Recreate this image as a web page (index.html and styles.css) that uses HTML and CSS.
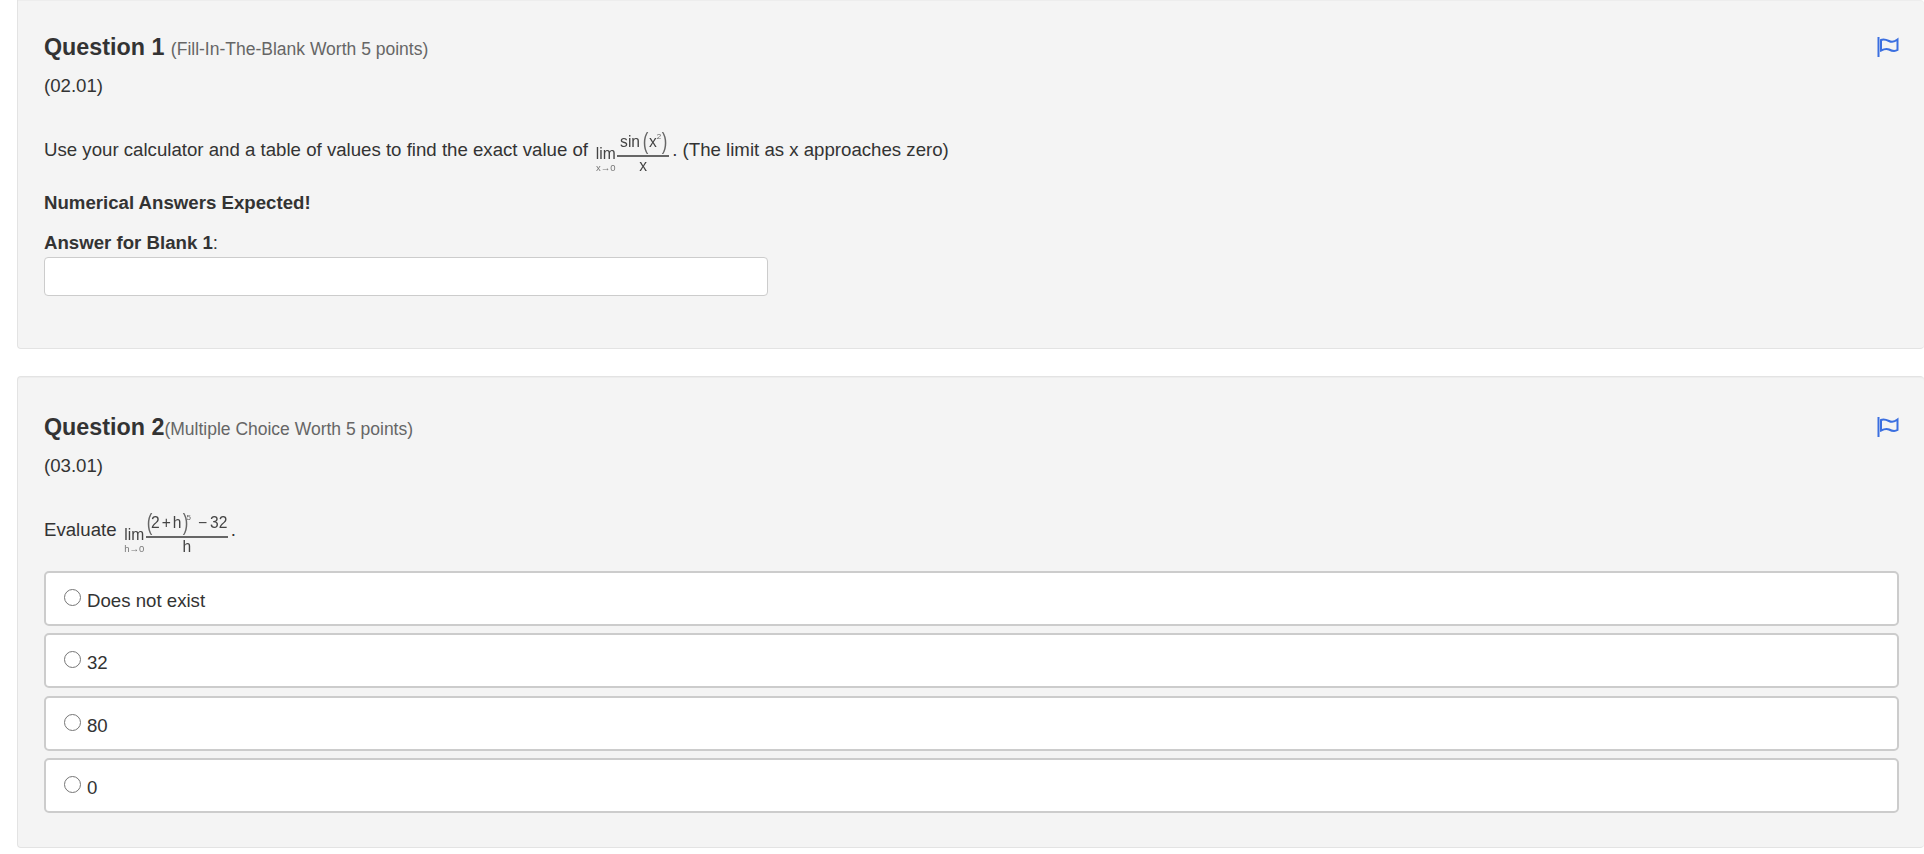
FILE: index.html
```html
<!DOCTYPE html>
<html lang="en">
<head>
<meta charset="utf-8">
<title>Questions</title>
<link rel="stylesheet" href="styles.css">
</head>
<body>
<main class="page">
  <section class="card card-first">
    <header class="head">
      <h2 class="title">Question 1 <span class="kind">(Fill-In-The-Blank Worth 5 points)</span></h2>
      <svg class="flag" viewBox="0 0 23 20" aria-hidden="true"><path d="M1.500 0v20M4 3C7 1.500 9 2.500 12 4S18 4.500 20.500 2.500V13C18 14.500 15 14 12 12.500S7 12 4 13.500Z"/></svg>
    </header>
    <p class="code">(02.01)</p>
    <p class="stem">Use your calculator and a table of values to find the exact value of <span class="math"><span class="lim">lim<small>x→0</small></span><span class="frac frac-sin"><span class="num">sin<span class="paren paren-open">(</span>x<sup>2</sup><span class="paren">)</span></span><span class="den">x</span></span></span>. (The limit as x approaches zero)</p>
    <p class="strong expected">Numerical Answers Expected!</p>
    <label class="blank-label" for="blank1"><b>Answer for Blank 1</b>:</label>
    <input class="blank" id="blank1" type="text">
  </section>

  <section class="card card-second">
    <header class="head">
      <h2 class="title">Question 2<span class="kind">(Multiple Choice Worth 5 points)</span></h2>
      <svg class="flag" viewBox="0 0 23 20" aria-hidden="true"><path d="M1.500 0v20M4 3C7 1.500 9 2.500 12 4S18 4.500 20.500 2.500V13C18 14.500 15 14 12 12.500S7 12 4 13.500Z"/></svg>
    </header>
    <p class="code">(03.01)</p>
    <p class="stem">Evaluate <span class="math math-low"><span class="lim">lim<small>h→0</small></span><span class="frac frac-poly"><span class="num"><span class="paren">(</span>2<span class="op">+</span>h<span class="paren">)</span><sup>5</sup><span class="op op-wide">−</span>32</span><span class="den">h</span></span></span>.</p>
    <div class="options">
      <label class="option"><input type="radio" name="q2"><span>Does not exist</span></label>
      <label class="option"><input type="radio" name="q2"><span>32</span></label>
      <label class="option"><input type="radio" name="q2"><span>80</span></label>
      <label class="option"><input type="radio" name="q2"><span>0</span></label>
    </div>
  </section>
</main>
</body>
</html>
```
FILE: styles.css
```css
* { box-sizing: border-box; }
html, body { margin: 0; background: #fff; }
body {
  height: 854px;
  overflow: hidden;
  font-family: "Liberation Sans", Arial, sans-serif;
  font-size: 18.650px;
  color: #333;
}
.page { padding-left: 17px; display: flex; flex-direction: column; gap: 27px; }
.card {
  background: #f4f4f4;
  border: 1px solid #e3e3e3;
  border-right: 0;
  border-radius: 4px;
  padding: 0 24px 0 26px;
  box-shadow: inset 0 1px 1px rgba(0,0,0,.03);
}
.card-first { height: 349px; border-top: 0; border-top-left-radius: 0; padding-top: 32px; }
.card-second { height: 472px; padding-top: 35px; }
.head { display: flex; justify-content: space-between; align-items: flex-start; height: 32px; }
.title { margin: 0; font-size: 23.300px; font-weight: 700; line-height: 30px; }
.kind { font-size: 17.500px; font-weight: 400; color: #666; }
.flag { width: 23px; height: 20px; margin-top: 5px; fill: none; stroke: #3b6fe0; stroke-width: 2; }
.code { margin: 10px 0 0; line-height: 24px; }
.stem { margin: 27px 0 0; height: 50px; line-height: 50px; white-space: nowrap; }
.math {
  display: inline-flex;
  align-items: flex-start;
  height: 46px;
  margin: 0 3px 0 2px;
  vertical-align: bottom;
  color: #444;
  filter: blur(.3px);
}
.lim { display: flex; flex-direction: column; align-items: center; width: 21px; padding-top: 17px; font-size: 15.600px; line-height: 16px; }
.lim small { font-size: 9.500px; line-height: 11px; color: #777; white-space: nowrap; }
.frac { display: flex; flex-direction: column; align-items: center; margin-left: 1px; font-size: 15.600px; }
.frac-sin { width: 52px; }
.frac-poly { width: 82px; }
.num {
  display: block;
  width: 100%;
  height: 28px;
  text-align: center;
  line-height: 26px;
  border-bottom: 2px solid #666;
  white-space: nowrap;
}
.den { line-height: 18px; }
.math-low .num { height: 29px; line-height: 28px; }
.math-low .den { line-height: 17px; }
.math-low .lim { padding-top: 18px; }
.paren {
  display: inline-block;
  width: 5px;
  font-size: 24px;
  font-weight: 400;
  line-height: 20px;
  text-align: center;
  vertical-align: -2px;
  color: #666;
  transform: scaleX(.7);
}
.paren-open { margin-left: 2px; margin-right: 2px; }
.op { margin: 0 2px; }
.op-wide { margin: 0 3px 0 7px; }
sup { font-size: 8px; line-height: 0; vertical-align: 8px; color: #666; }
.strong { font-weight: 700; margin: 0; }
.expected { margin-top: 16px; line-height: 24px; }
.blank-label { display: block; margin-top: 16px; line-height: 24px; }
.blank {
  display: block;
  width: 724px;
  height: 39px;
  margin-top: 2px;
  background: #fff;
  border: 1px solid #ccc;
  border-radius: 4px;
  padding: 0 8px;
}
.options { display: flex; flex-direction: column; gap: 7.330px; margin-top: 16px; width: 1855px; }
.option {
  display: flex;
  align-items: flex-start;
  height: 55px;
  padding: 14px 18px 0;
  background: #fff;
  border: 2px solid #ccc;
  border-radius: 5px;
  line-height: 24px;
}
.option input {
  appearance: none;
  width: 17px;
  height: 17px;
  margin: 2px 6px 0 0;
  border: 1px solid #767676;
  border-radius: 50%;
  background: #fff;
  flex: none;
}
.option span { display: block; margin-top: 2px; }
```
